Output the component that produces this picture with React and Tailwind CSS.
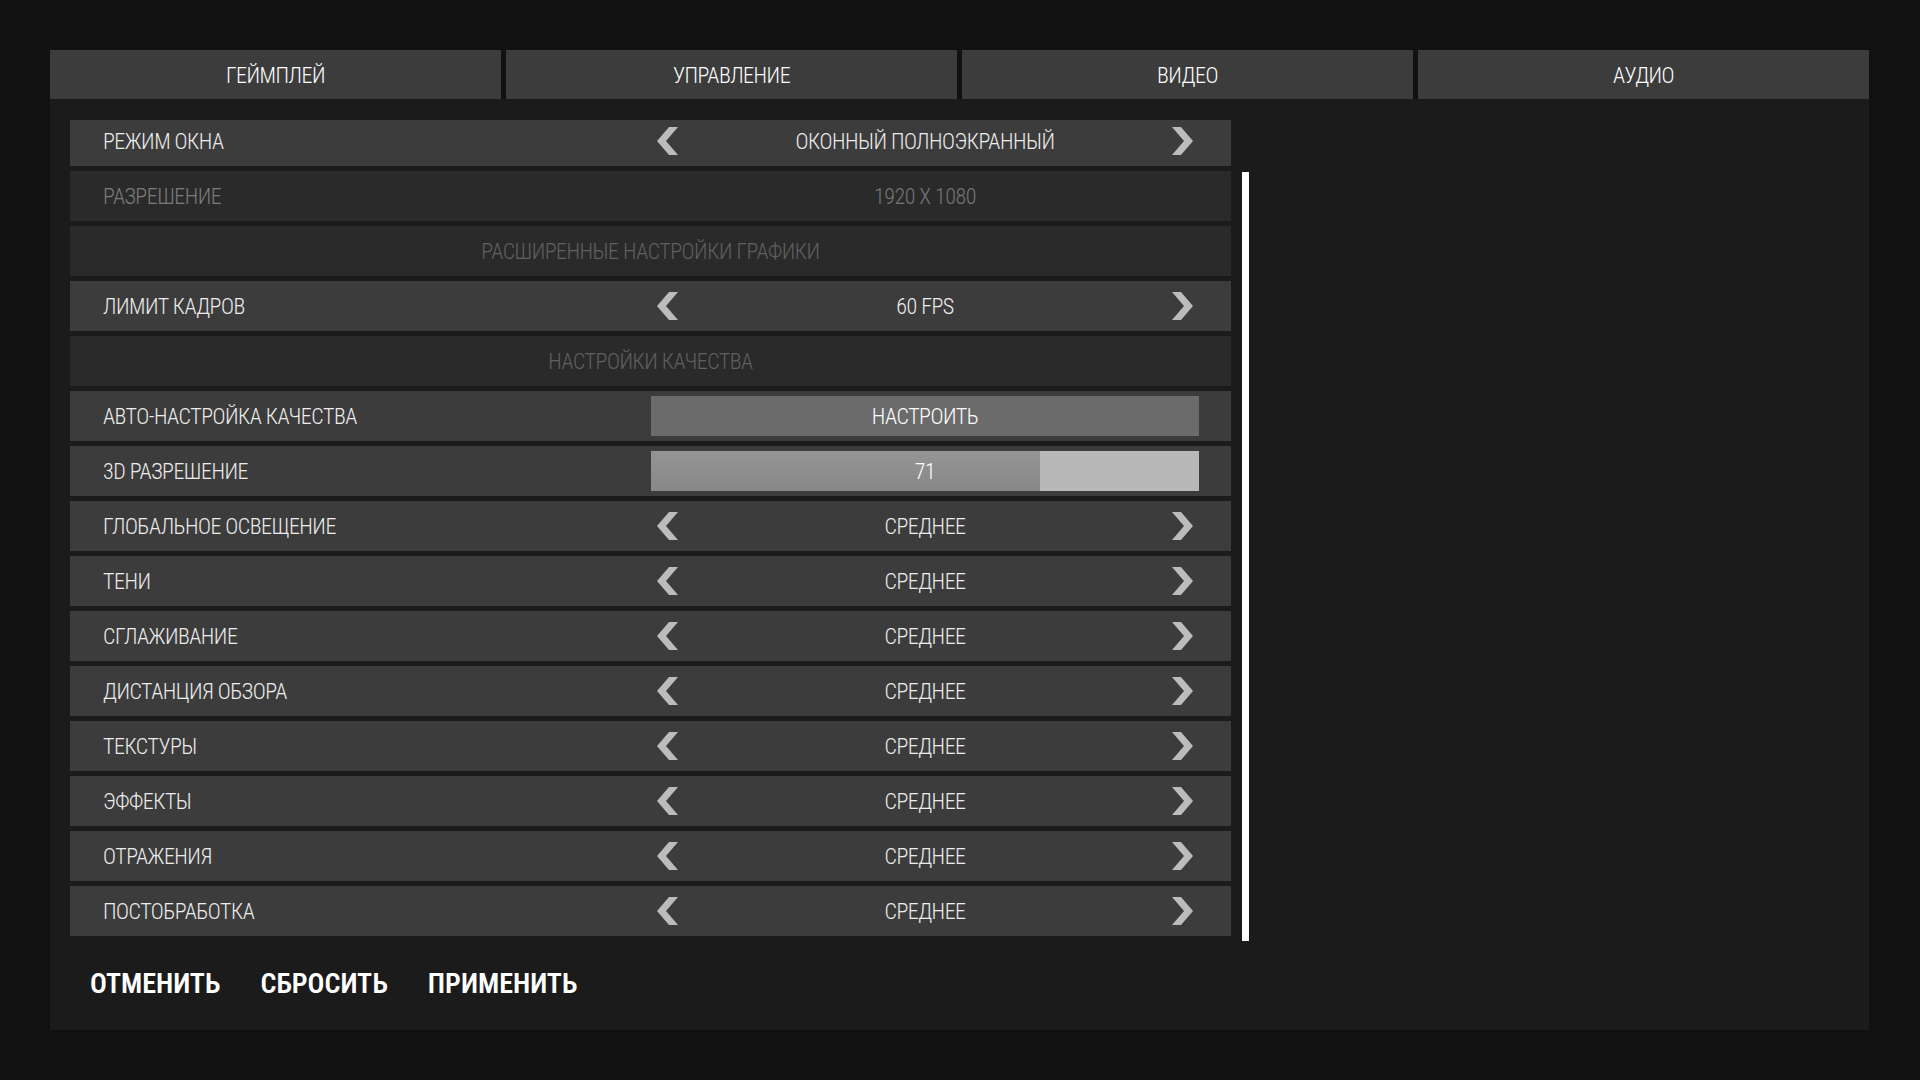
import { useState } from "react";

const tabs = ["ГЕЙМПЛЕЙ", "УПРАВЛЕНИЕ", "ВИДЕО", "АУДИО"];

const rows = [
  { type: "select", label: "РЕЖИМ ОКНА", value: "ОКОННЫЙ ПОЛНОЭКРАННЫЙ" },
  { type: "disabled", label: "РАЗРЕШЕНИЕ", value: "1920 X 1080" },
  { type: "header", label: "РАСШИРЕННЫЕ НАСТРОЙКИ ГРАФИКИ" },
  { type: "select", label: "ЛИМИТ КАДРОВ", value: "60 FPS" },
  { type: "header", label: "НАСТРОЙКИ КАЧЕСТВА" },
  { type: "button", label: "АВТО-НАСТРОЙКА КАЧЕСТВА", value: "НАСТРОИТЬ" },
  { type: "slider", label: "3D РАЗРЕШЕНИЕ", value: 71 },
  { type: "select", label: "ГЛОБАЛЬНОЕ ОСВЕЩЕНИЕ", value: "СРЕДНЕЕ" },
  { type: "select", label: "ТЕНИ", value: "СРЕДНЕЕ" },
  { type: "select", label: "СГЛАЖИВАНИЕ", value: "СРЕДНЕЕ" },
  { type: "select", label: "ДИСТАНЦИЯ ОБЗОРА", value: "СРЕДНЕЕ" },
  { type: "select", label: "ТЕКСТУРЫ", value: "СРЕДНЕЕ" },
  { type: "select", label: "ЭФФЕКТЫ", value: "СРЕДНЕЕ" },
  { type: "select", label: "ОТРАЖЕНИЯ", value: "СРЕДНЕЕ" },
  { type: "select", label: "ПОСТОБРАБОТКА", value: "СРЕДНЕЕ" },
];

const Chevron = ({ dir }) => (
  <svg width="21" height="28" viewBox="0 0 21 28" className="shrink-0">
    {dir === "left" ? (
      <polygon points="12,0 21,0 9,14 21,28 12,28 0,14" fill="#bcbcbc" />
    ) : (
      <polygon points="0,0 9,0 21,14 9,28 0,28 12,14" fill="#bcbcbc" />
    )}
  </svg>
);

const Row = ({ row }) => {
  if (row.type === "header") {
    return (
      <div className="h-[50px] bg-[#2a2a2a] flex items-center justify-center text-[#606060] pt-[2px]">
        {row.label}
      </div>
    );
  }

  const dim = row.type === "disabled";

  return (
    <div className={`h-[50px] flex items-center ${dim ? "bg-[#2a2a2a]" : "bg-[#3c3c3c]"}`}>
      <div className={`flex-1 pl-[33px] pt-[2px] ${dim ? "text-[#7c7c7c]" : "text-[#ededed]"}`}>{row.label}</div>
      <div className="w-[548px] mr-[32px] h-[40px] flex items-center">
        {row.type === "select" && (
          <div className="w-full flex items-center justify-between px-[6px] text-[#ededed]">
            <Chevron dir="left" />
            <span className="pt-[2px]">{row.value}</span>
            <Chevron dir="right" />
          </div>
        )}
        {row.type === "disabled" && (
          <div className="w-full text-center text-[#767676] pt-[2px]">{row.value}</div>
        )}
        {row.type === "button" && (
          <div className="w-full h-full bg-[#6b6b6b] flex items-center justify-center text-white pt-[2px]">
            {row.value}
          </div>
        )}
        {row.type === "slider" && (
          <div className="relative w-full h-full bg-[#b8b8b8]">
            <div
              className="h-full bg-gradient-to-b from-[#959595] to-[#878787]"
              style={{ width: `${row.value}%` }}
            />
            <div className="absolute inset-0 flex items-center justify-center text-white pt-[2px]">
              {row.value}
            </div>
          </div>
        )}
      </div>
    </div>
  );
};

export default function App() {
  const [tab] = useState(2);

  return (
    <div className="w-full h-[1080px] bg-[#111111] pt-[50px] pl-[50px] pr-[51px] font-['Roboto_Condensed','Roboto',sans-serif] font-stretch-[75%] font-light text-[22px] tracking-[-0.5px] leading-none">
      {/* Tabs */}
      <div className="grid grid-cols-4 gap-[5px]">
        {tabs.map((t, i) => (
          <div
            key={t}
            className={`h-[49px] bg-[#3c3c3c] flex items-center justify-center text-[22px] pt-[2px] ${
              i === tab ? "text-white" : "text-white"
            }`}
          >
            {t}
          </div>
        ))}
      </div>

      {/* Panel */}
      <div className="h-[931px] bg-[#1b1b1b] pl-[20px] pt-[21px]">
        <div className="flex">
          <div className="w-[1161px] h-[816px] overflow-hidden">
            <div className="-mt-[4px] flex flex-col gap-[5px]">
              {rows.map((r) => (
                <Row key={r.label} row={r} />
              ))}
            </div>
          </div>
          <div className="ml-[11px] w-[7px]">
            <div className="mt-[52px] h-[769px] bg-white" />
          </div>
        </div>

        {/* Bottom buttons */}
        <div className="mt-[25px] pl-[20px] flex gap-[40px] font-semibold text-[28px] tracking-[0px] leading-[36px] text-white">
          <span>ОТМЕНИТЬ</span>
          <span>СБРОСИТЬ</span>
          <span>ПРИМЕНИТЬ</span>
        </div>
      </div>
    </div>
  );
}
